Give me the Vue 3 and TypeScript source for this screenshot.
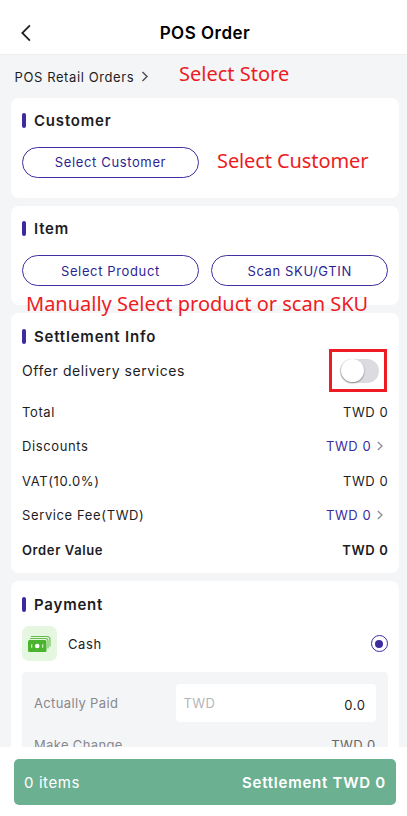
<script setup lang="ts">
import { ref } from 'vue'

interface Row {
  label: string
  value: string
  link?: boolean
  strong?: boolean
}

const delivery = ref(false)
const rows: Row[] = [
  { label: 'Total', value: 'TWD 0' },
  { label: 'Discounts', value: 'TWD 0', link: true },
  { label: 'VAT(10.0%)', value: 'TWD 0' },
  { label: 'Service Fee(TWD)', value: 'TWD 0', link: true },
  { label: 'Order Value', value: 'TWD 0', strong: true },
]
</script>

<template>
  <div class="screen">
    <header class="header">
      <svg class="back" viewBox="0 0 12 18" width="12" height="18"><path d="M10.900 1.300 3.300 9l7.600 7.700" /></svg>
      <h1 class="title">POS Order</h1>
    </header>

    <main class="content">
      <div class="store">
        <span class="store-name">POS Retail Orders</span>
        <svg class="store-arrow" viewBox="0 0 8 11" width="8" height="11"><path d="M1.5 1 6 5.5 1.5 10" /></svg>
      </div>

      <section class="card card-customer">
        <h2 class="heading"><span>Customer</span></h2>
        <div class="buttons"><button class="pill">Select Customer</button></div>
      </section>

      <section class="card card-item">
        <h2 class="heading"><span>Item</span></h2>
        <div class="buttons">
          <button class="pill pill-product">Select Product</button>
          <button class="pill pill-scan">Scan SKU/GTIN</button>
        </div>
      </section>

      <section class="card card-settlement">
        <h2 class="heading"><span>Settlement Info</span></h2>
        <div class="delivery">
          <span>Offer delivery services</span>
          <div class="highlight">
            <div class="switch" :class="{ on: delivery }" @click="delivery = !delivery"><i class="knob"></i></div>
          </div>
        </div>
        <div v-for="row in rows" :key="row.label" class="row" :class="{ link: row.link, strong: row.strong }">
          <span class="label">{{ row.label }}</span>
          <span class="value">{{ row.value }}</span>
          <svg v-if="row.link" class="row-arrow" viewBox="0 0 6 10" width="6" height="10"><path d="M.8 1 5 5 .8 9" /></svg>
        </div>
      </section>

      <section class="card card-payment">
        <h2 class="heading"><span>Payment</span></h2>
        <div class="method">
          <div class="cash-icon">
            <svg viewBox="0 0 35 35" width="35" height="35">
              <path class="note-edge" d="M9 10.500h16q3 0 3 3v7M8 12.500h15.500q2.500 0 2.500 2.500v7.500" />
              <rect class="note" x="6" y="14" width="18.500" height="12" rx="1.500" />
              <circle class="mark" cx="15.200" cy="20" r="2.300" />
              <path class="mark-line" d="M9.700 18.200v3.600M20.700 18.200v3.600" />
            </svg>
          </div>
          <span class="method-name">Cash</span>
          <i class="radio"></i>
        </div>
        <div class="cash-panel">
          <div class="paid">
            <span class="muted">Actually Paid</span>
            <div class="input"><span class="currency">TWD</span><span class="amount">0.0</span></div>
          </div>
          <div class="change"><span>Make Change</span><span class="change-value">TWD 0</span></div>
        </div>
      </section>
    </main>

    <footer class="footer">
      <div class="checkout">
        <span class="count">0 items</span>
        <span class="sum">Settlement TWD 0</span>
      </div>
    </footer>

    <span class="note-text note-store">Select Store</span>
    <span class="note-text note-customer">Select Customer</span>
    <span class="note-text note-product">Manually Select product or scan SKU</span>
  </div>
</template>

<style>
body { margin: 0; background: #fff; }
</style>

<style scoped>
* { box-sizing: border-box; }
.screen {
  position: relative;
  display: flex;
  flex-direction: column;
  width: 407px;
  height: 816px;
  overflow: hidden;
  background: #fff;
  color: #1d1d1f;
  font-family: Inter, "Liberation Sans", sans-serif;
  font-size: 13px;
  letter-spacing: .6px;
  white-space: nowrap;
}
svg { display: block; fill: none; flex: none; }
.header {
  display: grid;
  grid-template-columns: 20px 1fr 20px;
  align-items: center;
  height: 54px;
  flex: none;
  padding: 12px 17px 0 19px;
}
.back { stroke: #222; stroke-width: 1.8; }
.title { margin: 0; padding-left: 1px; text-align: center; color: #000; font-size: 17px; font-weight: 600; letter-spacing: .5px; }
.content { height: 693px; overflow: hidden; padding: 0 8px 0 10.500px; background: #f4f5f7; border-top: 1px solid #eeeff2; }
.store { display: flex; align-items: center; height: 43px; padding: 0 0 0 4px; }
.store-arrow { margin-left: 7px; stroke: #555; stroke-width: 1.5; }
.card { padding: 13px 11.500px 0; border-radius: 8px; background: #fff; }
.card-customer { height: 99.500px; padding-top: 12px; }
.card-customer .buttons { margin-top: 17px; }
.card-customer .pill { padding-bottom: 2px; }
.card-item { height: 99.500px; margin-top: 8px; }
.card-settlement { height: 260px; margin-top: 8px; }
.card-payment { height: 260px; margin-top: 8px; }
.heading { display: flex; align-items: center; gap: 8px; height: 20px; margin: 0; font-size: 15px; font-weight: 600; letter-spacing: .8px; }
.heading::before { content: ""; width: 4px; height: 15px; border-radius: 2px; background: #3c2ca0; }
.buttons { display: flex; gap: 12px; margin-top: 16px; }
.pill {
  width: 177px;
  height: 31px;
  padding: 0;
  border: 1px solid #3f2fa0;
  border-radius: 16px;
  background: #fff;
  color: #2e1f92;
  font: inherit;
  letter-spacing: .63px;
}
.card-item .pill { padding-top: 1px; }
.pill-scan { padding-left: 1px; }
.delivery { display: flex; align-items: center; justify-content: space-between; height: 43px; margin: 3px 0 2.500px; font-size: 14px; letter-spacing: .57px; }
.highlight { display: grid; place-items: center; width: 58px; height: 43px; margin-right: 1px; border: 3px solid #ed1c24; }
.switch { width: 39px; height: 24px; margin-left: 4px; border-radius: 12px; background: #dcdce0; }
.knob { display: block; width: 23px; height: 23px; margin-left: .5px; border-radius: 50%; background: #fff; box-shadow: 0 1px 2px rgba(0, 0, 0, .4); }
.switch.on { background: #3c2ca0; }
.switch.on .knob { margin-left: 16px; }
.row { display: flex; align-items: center; height: 34.500px; }
.label { letter-spacing: .62px; }
.value { margin-left: auto; margin-right: -.9px; }
.row-arrow { margin: 0 5px 0 6px; stroke: #8c8c94; stroke-width: 1.3; }
.link .value { color: #3c2ca0; }
.strong { font-weight: 600; }
.method { display: flex; align-items: center; height: 35px; margin-top: 12px; }
.cash-icon { width: 35px; height: 35px; border-radius: 7px; background: #e5f6e1; }
.note-edge { stroke: #65bd4b; stroke-width: 1.1; }
.note { fill: #4ab42e; }
.mark { fill: #fff; }
.mark-line { stroke: #dff3d9; stroke-width: 1.1; }
.method-name { margin-left: 11px; }
.radio { display: grid; place-items: center; width: 17px; height: 17px; margin-left: auto; border: 1px solid #3c2ca0; border-radius: 50%; }
.radio::after { content: ""; width: 8px; height: 8px; border-radius: 50%; background: #3c2ca0; }
.cash-panel { height: 160px; margin-top: 11px; padding: 12px 12px 0; border-radius: 4px; background: #f4f5f7; color: #88888d; letter-spacing: .35px; }
.paid { display: flex; align-items: center; justify-content: space-between; height: 38px; }
.input { display: flex; align-items: center; justify-content: space-between; width: 200px; height: 38px; padding: 0 10px 0 8px; border-radius: 4px; background: #fff; }
.currency { color: #b5b5b9; }
.amount { padding-top: 3px; color: #1d1d1f; letter-spacing: .6px; }
.change { display: flex; justify-content: space-between; margin-top: 15px; line-height: 16px; }
.change-value { color: #66666b; }
.footer { height: 69px; padding: 12px 11px 11px 14px; background: #fff; }
.checkout { display: flex; align-items: center; justify-content: space-between; height: 46px; padding: 0 10px; border-radius: 5px; background: #6cb092; color: #fff; font-size: 15px; }
.sum { font-weight: 600; letter-spacing: .75px; }
.note-text { position: absolute; color: #ed1c24; font-family: "Noto Sans", "Open Sans", sans-serif; font-size: 20px; line-height: 28px; letter-spacing: 0; }
.note-store { left: 179px; top: 60px; }
.note-customer { left: 217px; top: 147px; letter-spacing: -.1px; }
.note-product { left: 26px; top: 290px; }
</style>
